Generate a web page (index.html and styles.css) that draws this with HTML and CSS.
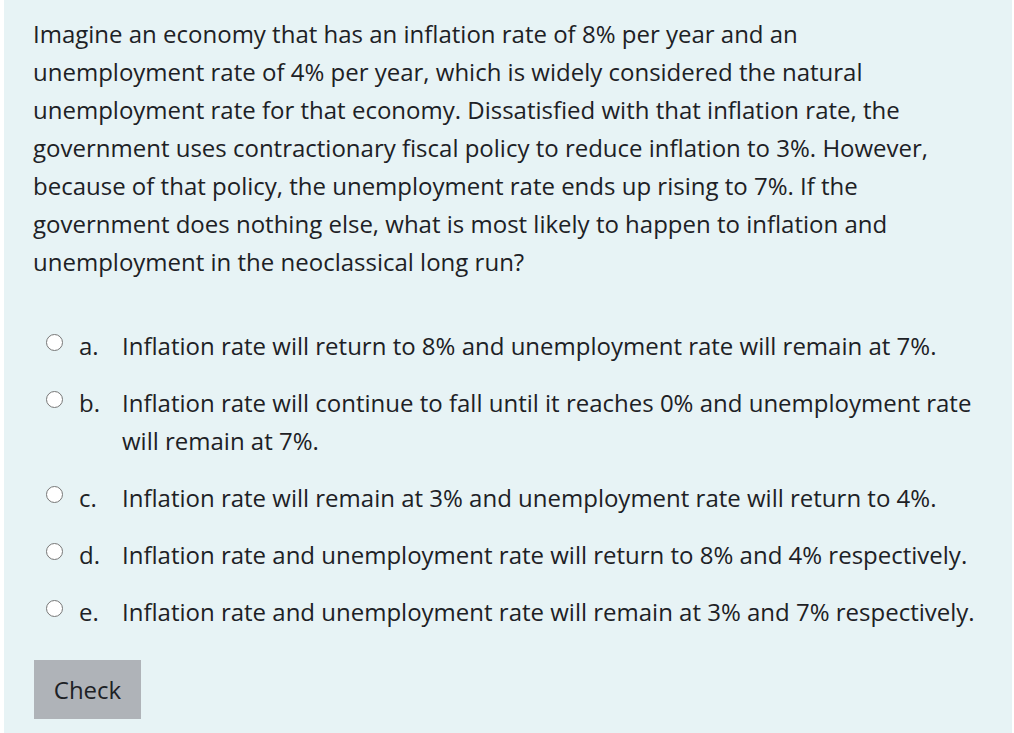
FILE: index.html
```html
<!DOCTYPE html>
<html lang="en">
<head>
<meta charset="utf-8">
<title>Question</title>
<link rel="stylesheet" href="styles.css">
</head>
<body>
<div class="que">
  <div class="qtext">Imagine an economy that has an inflation rate of 8% per year and an unemployment rate of 4% per year, which is widely considered the natural unemployment rate for that economy. Dissatisfied with that inflation rate, the government uses contractionary fiscal policy to reduce inflation to 3%. However, because of that policy, the unemployment rate ends up rising to 7%. If the government does nothing else, what is most likely to happen to inflation and unemployment in the neoclassical long run?</div>
  <div class="answers">
    <label class="opt"><span class="radio"></span><span class="num">a.</span><span class="txt">Inflation rate will return to 8% and unemployment rate will remain at 7%.</span></label>
    <label class="opt"><span class="radio"></span><span class="num">b.</span><span class="txt">Inflation rate will continue to fall until it reaches 0% and unemployment rate will remain at 7%.</span></label>
    <label class="opt"><span class="radio"></span><span class="num">c.</span><span class="txt">Inflation rate will remain at 3% and unemployment rate will return to 4%.</span></label>
    <label class="opt"><span class="radio"></span><span class="num">d.</span><span class="txt">Inflation rate and unemployment rate will return to 8% and 4% respectively.</span></label>
    <label class="opt"><span class="radio"></span><span class="num">e.</span><span class="txt">Inflation rate and unemployment rate will remain at 3% and 7% respectively.</span></label>
  </div>
  <button class="check" type="button">Check</button>
</div>
</body>
</html>
```
FILE: styles.css
```css
html, body {
  margin: 0;
  padding: 0;
  background: #ffffff;
}
body {
  font-family: "Open Sans", "Noto Sans", sans-serif;
  color: #1d2125;
}
.que {
  margin: 0 2px 0 4px;
  min-height: 733px;
  box-sizing: border-box;
  background: #e7f3f5;
  padding: 15px 30px 0 29px;
}
.qtext {
  font-size: 24px;
  line-height: 38px;
  width: 915px;
}
.answers {
  margin-top: 46px;
  display: flex;
  flex-direction: column;
  gap: 19px;
}
.opt {
  display: flex;
  align-items: flex-start;
  font-size: 24px;
  line-height: 38px;
}
.radio {
  flex: none;
  width: 15px;
  height: 15px;
  border: 1.5px solid #777777;
  border-radius: 50%;
  background: #fff;
  margin: 7px 0 0 13px;
}
.num {
  flex: none;
  width: 43px;
  margin-left: 16px;
}
.txt {
  flex: 1;
}
.check {
  margin-top: 29px;
  margin-left: 1px;
  width: 107px;
  height: 59px;
  border: none;
  background: #afb3b8;
  color: #1d2125;
  font-family: inherit;
  font-size: 24px;
  padding: 0;
}
```
